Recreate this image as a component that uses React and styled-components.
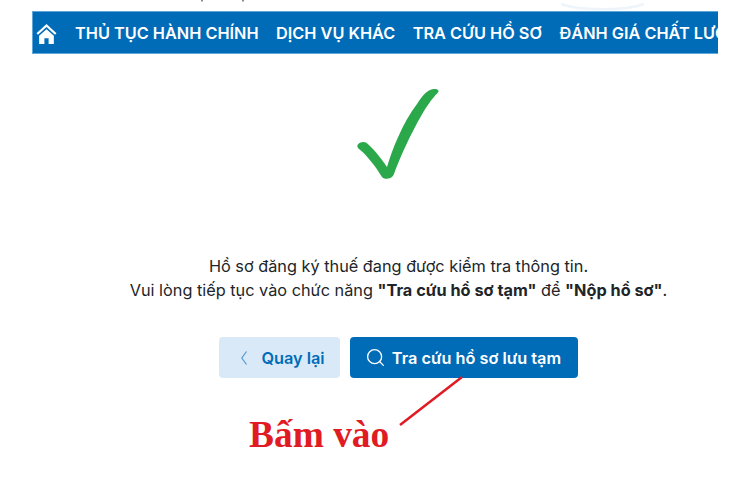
import styled, { createGlobalStyle } from "styled-components";
import { Search } from "lucide-react";

const GlobalStyle = createGlobalStyle`
  html, body {
    margin: 0;
    background: #fff;
  }
  body {
    font-family: Inter, "Liberation Sans", sans-serif;
  }
`;

const menuItems = [
  "THỦ TỤC HÀNH CHÍNH",
  "DỊCH VỤ KHÁC",
  "TRA CỨU HỒ SƠ",
  "ĐÁNH GIÁ CHẤT LƯỢNG",
];

const App = () => (
  <Page>
    <GlobalStyle />
    <TopRemnants viewBox="0 0 753 11">
      <rect x="201" y="0" width="2" height="1.5" fill="#8a8a8a" />
      <rect x="242" y="0" width="2" height="1.5" fill="#8a8a8a" />
      <path
        d="M561 4C580 11 625 11 644 4"
        stroke="#eef5fa"
        strokeWidth="2.5"
        fill="none"
      />
    </TopRemnants>
    <NavBar>
      <HomeIcon viewBox="0 0 24 24">
        <path d="M12 1 0.6 11.6l1.7 1.9L12 4.6l9.7 8.9 1.7-1.9z" fill="#fff" />
        <path d="M12 7 3.6 14.6V24h6v-6.5h4.8V24h6v-9.4z" fill="#fff" />
      </HomeIcon>
      <Menu>
        {menuItems.map((item) => (
          <MenuItem key={item}>{item}</MenuItem>
        ))}
      </Menu>
    </NavBar>
    <Content>
      <CheckMark viewBox="0 0 82 92">
        <path
          d="M0.5 57C2 54.5 6 53 9 54.5C15 59 24 70 30 79C35 62 46 34 60 16C64 10 68 4 73 2C76 0.5 81 0.5 81.5 3C81.5 5 79 6 77 9C68 18 48 56 37 86C35 91.5 27 92 25 89C19 79 9 66 2 61C0.5 60 0 58 0.5 57Z"
          fill="#2aa84a"
        />
      </CheckMark>
      <Message>
        Hồ sơ đăng ký thuế đang được kiểm tra thông tin.
        <br />
        Vui lòng tiếp tục vào chức năng <strong>"Tra cứu hồ sơ tạm"</strong> để{" "}
        <strong>"Nộp hồ sơ"</strong>.
      </Message>
      <Actions>
        <BackButton>
          <BackChevron viewBox="0 0 6 14">
            <polyline
              points="5.5,0.5 0.8,7 5.5,13.5"
              stroke="#4a94cf"
              strokeWidth="1.1"
              fill="none"
            />
          </BackChevron>
          Quay lại
        </BackButton>
        <PrimaryButton>
          <Search size={21} strokeWidth={1.5} />
          Tra cứu hồ sơ lưu tạm
        </PrimaryButton>
        <Pointer viewBox="0 0 66 50">
          <line x1="64" y1="1" x2="2" y2="49" stroke="#e01b24" strokeWidth="2.5" />
        </Pointer>
        <Note>Bấm vào</Note>
      </Actions>
    </Content>
  </Page>
);

const Page = styled.div`
  position: relative;
  width: 753px;
  height: 480px;
  padding: 11px 35px 0 32px;
  box-sizing: border-box;
  overflow: hidden;
`;

const TopRemnants = styled.svg`
  position: absolute;
  left: 0;
  top: 0;
  width: 753px;
  height: 11px;
`;

const NavBar = styled.nav`
  display: flex;
  align-items: center;
  height: 43px;
  box-sizing: border-box;
  padding-left: 3px;
  background: #006cb8;
  border: 1px solid #5fa6da;
  border-right: 0;
  overflow: hidden;
`;

const HomeIcon = styled.svg`
  width: 21px;
  height: 21px;
  flex: none;
  margin-top: 1px;
`;

const Menu = styled.div`
  display: flex;
  gap: 17.5px;
  margin-left: 18px;
  white-space: nowrap;
`;

const MenuItem = styled.span`
  color: #fff;
  font-size: 16.3px;
  font-weight: 600;
  line-height: 20px;
`;

const Content = styled.main`
  display: flex;
  flex-direction: column;
  align-items: center;
  padding-left: 47px;
`;

const CheckMark = styled.svg`
  width: 82px;
  height: 92px;
  margin-top: 34px;
  margin-left: -1px;
`;

const Message = styled.p`
  margin: 74px 0 0;
  color: #212529;
  font-size: 16.3px;
  line-height: 24px;
  text-align: center;

  strong {
    font-weight: 700;
  }
`;

const Actions = styled.div`
  position: relative;
  display: flex;
  gap: 10px;
  margin-top: 35px;
`;

const Button = styled.button`
  display: flex;
  align-items: center;
  justify-content: center;
  height: 41px;
  border: 0;
  border-radius: 4px;
  font-family: inherit;
  font-size: 16.3px;
  font-weight: 600;
`;

const BackButton = styled(Button)`
  gap: 14px;
  width: 121px;
  padding: 0 0 0 7px;
  background: #d9e9f8;
  color: #006cb8;
`;

const BackChevron = styled.svg`
  width: 6px;
  height: 14px;
  flex: none;
`;

const PrimaryButton = styled(Button)`
  gap: 6px;
  width: 228px;
  padding: 0 2px 0 0;
  background: #006cb8;
  color: #fff;
`;

const Pointer = styled.svg`
  position: absolute;
  left: 179px;
  top: 39px;
  width: 66px;
  height: 50px;
`;

const Note = styled.span`
  position: absolute;
  left: 30px;
  top: 76px;
  color: #e01b24;
  font-family: "Liberation Serif", serif;
  font-size: 37.4px;
  font-weight: 700;
  line-height: 44px;
  white-space: nowrap;
`;

export default App;
